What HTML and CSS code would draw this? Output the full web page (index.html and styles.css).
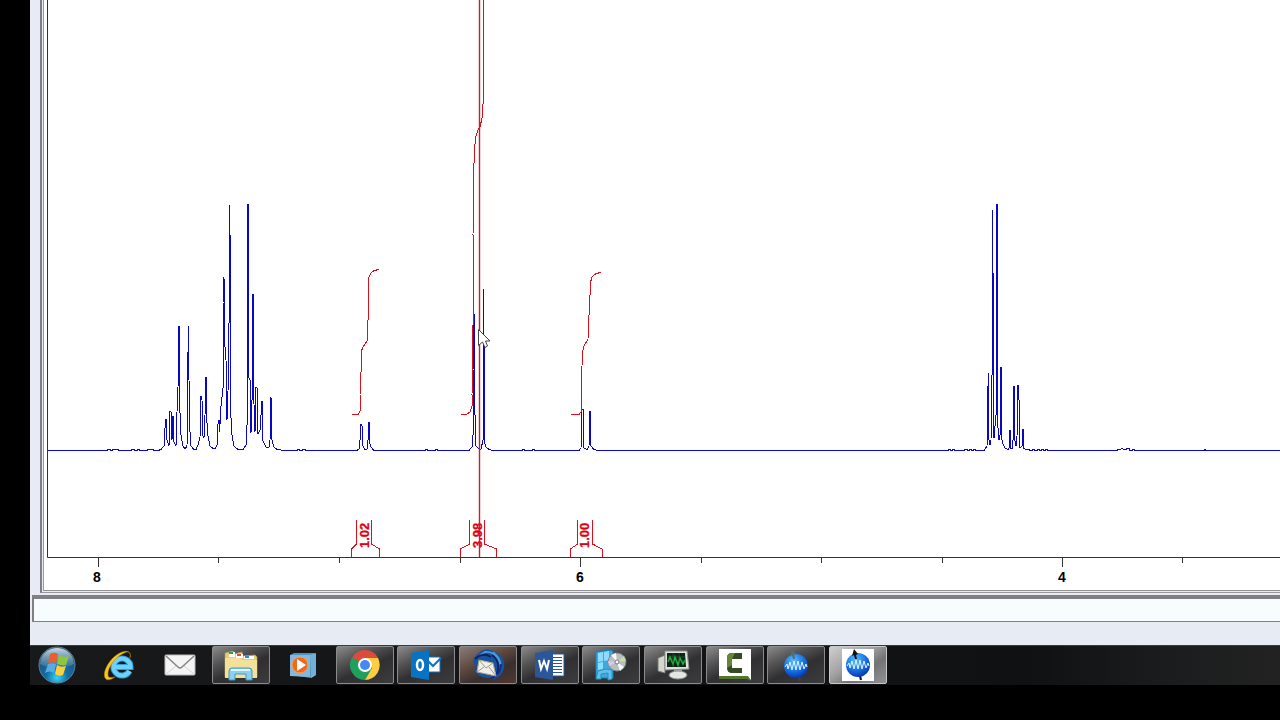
FILE: index.html
```html
<!DOCTYPE html>
<html lang="en">
<head>
<meta charset="UTF-8" />
<title>NMR spectrum</title>
<meta name="viewport" content="width=device-width, initial-scale=1" />
<link rel="stylesheet" href="styles.css">
</head>
<body>

<main class="workspace">
  <div class="frame">
    <div class="plot">
      <svg class="spectrum" viewBox="47 0 1233 590" preserveAspectRatio="xMinYMax slice" role="img" aria-label="Spectrum with integrals">
        <!-- axis -->
        <path class="axis" d="M47.5 0V557.5H1280M98.5 557V567M218.500 557V563M339.500 557V563M460.500 557V563M580.500 557V567M701.500 557V563M821.500 557V563M942.500 557V563M1062.500 557V567M1182.500 557V563"/>
        <g class="axis-label">
          <text x="97" y="582">8</text>
          <text x="580" y="582">6</text>
          <text x="1062" y="582">4</text>
        </g>

        <!-- signal -->
        <path class="signal" d="M48 450.500H107V449.500H110V450.500H112V449.500H118V450.500H131V449.500H134V450.500H137V449.500H139V450.500H147V449.500H153V450.500H158L161 449.500L164 446L165 428L166 419L167 440L169 446L170 411L171 412L172 440L173 416L174 442L176 446L177 412L178 387L179 326V390L181 435L183 446L185 449L187 446L188 352V326L189 380L190 432L191 446L194 449.500H196L198 445L200 437L201 396L202 400L203 436L204 438L205 415L206 377V410L208 436L210 446L213 448.500H215L217 445L218 424L219 420V432L220 424L221 406L223 388V303L224 277L225 347L226 360L227 420L228 392L229 323V205L230 235V400L232 435L234 446L238 449.500H243L246 445L247 425V204H248V376L250 380V430L251 433L252 400V300L253 294V376L255 432L256 387H257L258 434L260 430L262 401V415L263 441L266 447H269L270 440L271 397L272 440L274 447L277 449.500L284 450.500H297V449.500H299V450.500H302V449.500H305V450.500H357L359 449L360 440L361 424L362 426L363 446L365 449.500H367L368 440V422H369V440L371 447L374 450.500H425V449.500H427V450.500H435V449.500H437V450.500H469L472 447L473 435V370L474 312L475 415L476 446L479 449H481L483 440V289V345L484 346V440L486 447L489 449.500L493 450.500H522V449.500H524V450.500H532V449.500H534V450.500H579L581 448L582 409H583V440L584 448L587 449.500L589 446L590 411V425L591 446L594 449.500L598 450.500H948V449.500H950V450.500H952V449.500H954V450.500H964V449.500H967V450.500H969V449.500H971V450.500H973V449.500H975V450.500H984L987 446L988 386V373V435L990 445L991 440L992 375V210L993 273V433L994 438L996 415V204H997V415L999 440L1000 435V381L1001 367V436L1003 444L1005 448L1008 449.500L1009 448V430H1010V448L1012 449L1013 440V400L1014 386V436L1016 446L1017 436L1018 385L1019 400V438L1020 448L1022 446V429H1023V448L1026 449.500H1029V450.500H1032V449.500H1034V450.500H1037V449.500H1039V450.500H1041V449.500H1043V450.500H1045V449.500H1047V450.500H1117V449.500H1120L1122 448.500L1124 449.500H1126V448.500H1129V450.500H1132V449.500H1134V450.500H1204V449.500H1205V450.500H1280"/>

        <!-- integrals -->
        <g class="integral">
          <path d="M351.500 414.500H358L360 411V395L361 372V352L363 347L367 341L368 320V295L369 277L371 273L374 270.500L379 269.500"/>
          <path d="M460.500 414.500H466L470 412L472 406V395L473 325V235L474 163V155L475 144L476 136L478 130L480 127L482 118V109L483 104V0"/>
          <path d="M570.500 414.500H579L581.500 411V380L582.500 352L584 346L588 339L589 315L590 295V284L592 277L596 273.500L601 272.500"/>
          <path d="M356.500 520V544L351.500 549V557M371.500 520V544L379.500 549V557"/>
          <path d="M469.500 520V544L460.500 549V557M484.500 520V544L496.500 549V557"/>
          <path d="M577.500 520V544L570.500 549V557M592.500 520V544L602 549V557"/>
        </g>
        <g class="integral-label">
          <text transform="translate(369 548) rotate(-90)">1.02</text>
          <text transform="translate(482 548) rotate(-90)">3.98</text>
          <text transform="translate(589 548) rotate(-90)">1.00</text>
        </g>
        <path class="cursor-line" d="M479.500 0V557"/>

        <!-- mouse pointer -->
        <path class="pointer" d="M478.500 329.500V345.500L482.500 342L485 347.500L487.500 346L485.500 341H490Z"/>
      </svg>
    </div>
  </div>
</main>

<div class="commandbar">
  <input class="command" type="text" aria-label="Command line">
</div>
<div class="statusbar"></div>

<nav class="taskbar" aria-label="Taskbar">
  <button class="start" aria-label="Start">
    <svg width="40" height="38" viewBox="0 0 40 38">
      <defs>
        <radialGradient id="orb" cx="50%" cy="85%" r="75%">
          <stop offset="0" stop-color="#38d4f8"/>
          <stop offset=".4" stop-color="#126da6"/>
          <stop offset="1" stop-color="#254e70"/>
        </radialGradient>
        <linearGradient id="shine" x2="0" y2="1">
          <stop offset="0" stop-color="#d5e8f0" stop-opacity=".9"/>
          <stop offset="1" stop-color="#9cc4d8" stop-opacity=".15"/>
        </linearGradient>
      </defs>
      <circle cx="20" cy="19" r="18" fill="url(#orb)" stroke="#5d8299"/>
      <path d="M3 18C4 7 12 2 20 2s16 5 17 16c-10 5-24 5-34 0z" fill="url(#shine)"/>
      <path d="M13 8c3-2 6-1 8 0l-2 9c-3-1-5-1-8 0z" fill="#e8602f"/>
      <path d="M22 9c4 2 6 2 10 1l-3 9c-3 1-6 0-9-1z" fill="#8dc63f"/>
      <path d="M11 18c3-1 5-1 8 0l-2 9c-3-2-6-2-9 0z" fill="#58ace4"/>
      <path d="M20 19c3 2 6 2 9 1l-3 9c-3 1-5 1-8-1z" fill="#fccf3f"/>
    </svg>
  </button>

  <ul class="tasks">
    <li><button class="task" aria-label="Internet Explorer">
      <svg width="32" height="32" viewBox="0 0 32 32">
        <path d="M27.500 22A8.500 8.500 0 1 1 28.500 18H13" fill="none" stroke="#2b9ee0" stroke-width="6"/>
        <path d="M27.500 22A8.500 8.500 0 1 1 28.500 18H13" fill="none" stroke="#6fd0f8" stroke-width="4"/>
        <path d="M28 9C30 2 24 0 16 5 6 11-1 26 4 30c2 2 6 0 9-2-4 1-7 1-7-2C5 18 15 7 22 4c6-3 7 1 6 5z" fill="#f7c51d" stroke="#b98300" stroke-width=".5"/>
      </svg>
    </button></li>
    <li><button class="task" aria-label="Mail">
      <svg width="32" height="32" viewBox="0 0 32 32">
        <rect x="1" y="6" width="30" height="20" rx="1" fill="#f4f4f4" stroke="#bbb"/>
        <path d="M2 25l10-8M30 25l-10-8" stroke="#d2d2d2"/>
        <path d="M2 7l12 11q2 2 4 0L30 7" fill="none" stroke="#858585" stroke-width="1.500"/>
      </svg>
    </button></li>
    <li><button class="task open" aria-label="File Explorer">
      <svg width="34" height="32" viewBox="0 0 34 32">
        <path d="M1 4l8-2 1 3 8-2 1 4 12-1 2 2v20H1z" fill="#e9cc72" stroke="#b89946" stroke-width=".7"/>
        <path d="M5 3h6v5H5z" fill="#fff"/><path d="M5 3h4v2H5z" fill="#25a53b"/>
        <path d="M12 5h7v4h-7z" fill="#fff"/><path d="M13 5h4v2h-4z" fill="#d5532c"/>
        <path d="M20 7h10v3H20z" fill="#fff"/><path d="M21 7h4v2h-4z" fill="#3089d1"/>
        <path d="M1 9h15l2 2h15v18H1z" fill="#f3e09a"/>
        <path d="M5 31V22q0-3 3-3h17q3 0 3 3v9h-6v-6H11v6z" fill="#8cd0ee" stroke="#4299c5"/>
        <path d="M7 21h19" stroke="#e0f8ff" stroke-width="2"/>
      </svg>
    </button></li>
    <li><button class="task" aria-label="Media Player">
      <svg width="32" height="32" viewBox="0 0 32 32">
        <path d="M3 6l4-2h20l2 2v20l-5 3-21-3z" fill="#4c94bd"/>
        <path d="M3 6h20v22L3 27z" fill="#86b9d8"/>
        <path d="M23 6l6-2v22l-5 3z" fill="#70b2d7"/>
        <circle cx="13" cy="16" r="8" fill="#ed6b1e" stroke="#f7a15e"/>
        <path d="M10 10l9 6-9 6z" fill="#fff"/>
      </svg>
    </button></li>
    <li><button class="task open" aria-label="Chrome">
      <svg width="32" height="32" viewBox="0 0 32 32">
        <path d="M16 16L3 8.500A15 15 0 0 1 29 8.500z" fill="#dd4b3e"/>
        <path d="M16 16L3 8.500A15 15 0 0 0 16 31l7-11z" fill="#1fa15d"/>
        <path d="M16 9h13a15 15 0 0 1-13 22l7-12z" fill="#ffcd42"/>
        <circle cx="16" cy="16" r="7" fill="#fff"/>
        <circle cx="16" cy="16" r="5" fill="#4688f1"/>
      </svg>
    </button></li>
    <li><button class="task open" aria-label="Outlook">
      <svg width="32" height="32" viewBox="0 0 32 32">
        <path d="M16 8h14v15H16z" fill="#fff" stroke="#0873c4"/>
        <path d="M18 12l5 5 8-8" fill="none" stroke="#0873c4" stroke-width="2"/>
        <path d="M1 4l18-3v30L1 28z" fill="#0873c4"/>
        <ellipse cx="10" cy="16" rx="3" ry="5" fill="none" stroke="#fff" stroke-width="2.500"/>
      </svg>
    </button></li>
    <li><button class="task open warm" aria-label="Thunderbird">
      <svg width="34" height="32" viewBox="0 0 34 32">
        <path d="M2 13C3 6 8 4 10 2 15-1 20 0 24 3c7 3 10 9 9 16-1 7-8 12-14 12l4-3C15 31 6 27 3 21l3-1z" fill="#18549c"/>
        <path d="M8 7C14 1 21 2 26 8M13 3c8-2 14 5 16 13M22 3c9 7 10 15 3 23" fill="none" stroke="#4d9ad8" stroke-width="1.500"/>
        <path d="M21 6c7 5 8 13 4 20M4 10c4-4 10-6 16-2" fill="none" stroke="#0a2466" stroke-width="2"/>
        <path d="M30 15c0 7-4 12-10 15" fill="none" stroke="#162b8c" stroke-width="2"/>
        <path d="M8 11l14 3 3 13-19-4z" fill="#f1eee5" stroke="#aaa391"/>
        <path d="M8 11l7 8 7-5M6 23l7-5M25 27l-7-9" fill="none" stroke="#a59b88"/>
      </svg>
    </button></li>
    <li><button class="task open" aria-label="Word">
      <svg width="32" height="32" viewBox="0 0 32 32">
        <path d="M16 5h14v22H16z" fill="#fff" stroke="#2b569a"/>
        <path d="M18 8.500h10M18 11.500h10M18 14.500h10M18 17.500h10M18 20.500h10M18 23.500h10" stroke="#2b569a"/>
        <path d="M1 4l18-3v30L1 28z" fill="#2b579a"/>
        <path d="M5 11l2 9 3-8 3 8 2-9" fill="none" stroke="#fff" stroke-width="2"/>
      </svg>
    </button></li>
    <li><button class="task open" aria-label="Programs">
      <svg width="34" height="32" viewBox="0 0 34 32">
        <path d="M2 3l14-2 3 1v27H2z" fill="#3fa9dc" stroke="#197fb8"/>
        <path d="M4 4l5-1v9l-5 1zM10 3l5-1v9l-5 1zM4 14l5-1v7l-5 1z" fill="#8ddcff"/>
        <path d="M2 30l2-8 8-2 6 1v9l-4 1v-7l-7 1v5z" fill="#63c0ec" stroke="#2890c4"/>
        <circle cx="23" cy="13" r="9" fill="#b9bec0" stroke="#7d8588"/>
        <path d="M23 13L17 6l5-2zM23 13l7 5-4 4z" fill="#f8f8f8"/>
        <path d="M23 13l7-6 2 5z" fill="#c1df9d"/><path d="M23 13l-8 4-1-5z" fill="#dec6ed"/>
        <circle cx="23" cy="13" r="2" fill="#fff" stroke="#777"/>
      </svg>
    </button></li>
    <li><button class="task open" aria-label="System Monitor">
      <svg width="34" height="32" viewBox="0 0 34 32">
        <path d="M2 9l7-3v18l-7-2z" fill="#d5d6cf" stroke="#777"/>
        <path d="M18 19h8v6h-8z" fill="#a6aca8"/>
        <ellipse cx="22" cy="26" rx="9" ry="4" fill="#e4e6e2" stroke="#888"/>
        <path d="M9 2h22l2 18-24 1z" fill="#e0e3dd" stroke="#8c918c"/>
        <path d="M11 4h18l1 14H11z" fill="#102319"/>
        <path d="M12 13l2-5 3 7 2-7 3 8 2-7 3 6 2-4" fill="none" stroke="#1dbc3b" stroke-width="1.500"/>
        <path d="M11 8h18M11 12h18M17 4v14M23 4v14" stroke="#28653a" stroke-width=".6"/>
      </svg>
    </button></li>
    <li><button class="task open" aria-label="Camtasia">
      <svg width="34" height="34" viewBox="0 0 34 34">
        <path d="M1 1h32v31l-3-3H1z" fill="#fff"/>
        <path d="M1 28h29l3 5-4-2H1z" fill="#54772b"/>
        <path d="M24 5H14q-5 0-5 5v10q0 5 5 5h10v-5H14v-9h10z" fill="#344b23"/>
        <path d="M9 10q0-5 5-5h3l-3 6v6l-5 3z" fill="#64873a"/>
      </svg>
    </button></li>
    <li><button class="task open" aria-label="TopSpin">
      <svg width="32" height="34" viewBox="0 0 32 34">
        <defs>
          <radialGradient id="ball" cx="40%" cy="28%" r="72%">
            <stop offset="0" stop-color="#5cbcff"/>
            <stop offset=".55" stop-color="#1c79e8"/>
            <stop offset="1" stop-color="#0638b5"/>
          </radialGradient>
        </defs>
        <path d="M19 29l1 4" stroke="#444" stroke-width="2"/>
        <circle cx="16" cy="18" r="12" fill="url(#ball)"/>
        <path d="M12 1l4 5-2 1 1 4h-2l-1-4-2 1z" fill="#526b75"/>
        <path d="M5 19l2-3 1 5 2-7 2 8 2-9 2 9 2-9 2 9 2-8 2 7 2-5 1 3" fill="none" stroke="#dff6ff"/>
      </svg>
    </button></li>
    <li><button class="task open active" aria-label="TopSpin spectrum" aria-current="true">
      <svg width="32" height="34" viewBox="0 0 32 34">
        <path d="M0 1h32v32H0z" fill="#fff"/>
        <path d="M18 28l1 4" stroke="#111" stroke-width="2"/>
        <circle cx="16" cy="17" r="12" fill="url(#ball)"/>
        <path d="M12 1l4 5-2 1 1 4h-2l-1-4-2 1z" fill="#111"/>
        <path d="M5 18l2-3 1 5 2-7 2 8 2-9 2 9 2-9 2 9 2-8 2 7 2-5 1 3" fill="none" stroke="#dff6ff"/>
      </svg>
    </button></li>
  </ul>
</nav>

</body>
</html>
```

FILE: styles.css
```css
* { box-sizing:border-box; }
body {
  margin:0; height:100vh; padding:0 0 35px 30px; background:#000; overflow:hidden;
  display:flex; flex-direction:column; font-family:"Liberation Sans", Arial, sans-serif;
}

.workspace { flex:1; min-height:0; padding:0 0 2px 10px; background:#e8ebf5; display:flex; }
.frame { flex:1; min-width:0; border-left:2px solid #808084; border-bottom:1px solid #99999d; padding:0 0 1px 1px; display:flex; }
.plot { flex:1; min-width:0; border-left:1px solid #99999d; border-bottom:1px solid #909094; padding-left:3px; background:#fff; overflow:hidden; }
.spectrum { display:block; width:100%; height:100%; }

.axis { fill:none; stroke:#333; }
.axis-label { font-size:14px; font-weight:bold; text-anchor:middle; }
.signal, .integral { fill:none; stroke-linejoin:bevel; shape-rendering:crispEdges; }
.signal { stroke:#0808c4; }
.integral { stroke:#d8101c; }
.integral-label { font-size:13px; font-weight:bold; fill:#e00010; stroke:#e00010; stroke-width:.3; }
.cursor-line { stroke:#c4202a; stroke-width:1.4; }
.pointer { fill:#fff; stroke:#444; }

.commandbar { height:27px; padding-left:2px; background:#e8ebf5; display:flex; }
.command {
  flex:1; min-width:0; padding:0 8px; border:solid #808084; border-width:4px 0 1px 2px;
  border-radius:0; background:#f7fcff; font-size:13px; outline:none;
}
.statusbar { height:23px; background:#e7ebf4; }

.taskbar {
  height:40px; border-top:1px solid #3a3b42; display:flex; gap:5px;
  background:linear-gradient(90deg, #18191b, #101113 80%, #1c1d1e 92%, #222);
}
.start, .task { padding:0; border:0; background:none; display:flex; align-items:center; justify-content:center; }
.start { width:54px; height:38px; }
.tasks { flex:0 1 798px; margin:0; padding:0; list-style:none; display:flex; justify-content:space-between; }
.task { width:58px; height:38px; }
.open {
  border:1px solid #8b8b8d; border-radius:2px;
  background:linear-gradient(155deg, #8a8a8b 0%, #555556 30%, #303032 56%, #3c3c3e 100%);
}
.warm { background:linear-gradient(155deg, #8a7c78 0%, #5e4840 40%, #38302f 65%, #523830 100%); }
.active { border-color:#c8c8c8; background:linear-gradient(145deg, #cecece 0%, #a2a2a2 40%, #737375 65%, #929294 100%); }
```
